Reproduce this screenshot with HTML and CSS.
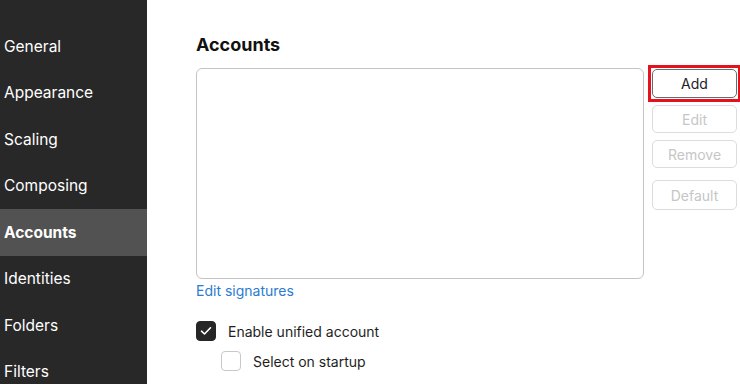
FILE: index.html
```html
<!DOCTYPE html>
<html lang="en">
<head>
    <meta charset="UTF-8">
    <meta name="viewport" content="width=device-width, initial-scale=1.0">
    <title>Preferences</title>
    <link rel="stylesheet" href="styles.css">
</head>
<body>
    <div class="sidebar">
        <a href="#">General</a>
        <a href="#">Appearance</a>
        <a href="#">Scaling</a>
        <a href="#">Composing</a>
        <a href="#" class="active">Accounts</a>
        <a href="#">Identities</a>
        <a href="#">Folders</a>
        <a href="#">Filters</a>
    </div>

    <div class="main">
        <h2>Accounts</h2>
        <div class="accounts">
            <div class="account-list"></div>
            <div class="buttons">
                <div class="highlight"><button class="primary">Add</button></div>
                <button disabled>Edit</button>
                <button disabled>Remove</button>
                <button disabled class="default">Default</button>
            </div>
        </div>
        <a href="#" class="link">Edit signatures</a>
        <label class="check">
            <span class="box checked">
                <svg width="12" height="10" viewBox="0 0 12 10"><path d="M1.5 5.2 L4.5 8 L10.5 1.8" fill="none" stroke="#fff" stroke-width="1.6" stroke-linecap="round" stroke-linejoin="round"/></svg>
            </span>
            Enable unified account
        </label>
        <label class="check sub">
            <span class="box"></span>
            Select on startup
        </label>
    </div>
</body>
</html>
```

FILE: styles.css
```css
body {
    margin: 0;
    padding: 0;
    display: flex;
    height: 100vh;
    overflow: hidden;
    background: #fff;
    font-family: Inter, "Noto Sans", sans-serif;
    color: #1e1e1e;
}
.sidebar {
    width: 147px;
    flex-shrink: 0;
    background: #282828;
    padding-top: 23px;
    display: flex;
    flex-direction: column;
}
.sidebar a {
    display: flex;
    align-items: center;
    flex-shrink: 0;
    height: 46.5px;
    padding-left: 4px;
    color: #fff;
    text-decoration: none;
    font-size: 15.5px;
}
.sidebar a.active {
    background: #525252;
    font-weight: bold;
}
.main {
    flex: 1;
    padding: 33px 0 0 49px;
    display: flex;
    flex-direction: column;
}
.main h2 {
    margin: 0 0 11px;
    font-size: 18px;
    line-height: 24px;
    font-weight: bold;
    color: #111;
}
.accounts {
    display: flex;
    gap: 8px;
}
.account-list {
    width: 446px;
    height: 209px;
    border: 1px solid #c4c4c4;
    border-radius: 6px;
}
.buttons {
    display: flex;
    flex-direction: column;
    gap: 7px;
    padding-top: 1px;
}
.buttons button {
    width: 85px;
    height: 28px;
    background: #fff;
    border: 1px solid #dcdcdc;
    border-radius: 5px;
    font-family: inherit;
    font-size: 14px;
    color: #c6c6c6;
}
.highlight {
    margin: -4px;
    padding: 1px;
    border: 3px solid #e3121c;
    display: flex;
}
.buttons button.primary {
    height: 29px;
    border-color: #6a6a6a;
    color: #222;
}
.buttons button.default {
    margin-top: 5px;
    height: 30px;
}
.link {
    margin-top: 3px;
    font-size: 14px;
    line-height: 18px;
    color: #2b7bd1;
    text-decoration: none;
    align-self: flex-start;
}
.check {
    display: flex;
    align-items: center;
    gap: 12px;
    font-size: 14px;
    color: #1e1e1e;
    margin-top: 21px;
}
.check.sub {
    margin-top: 10px;
    margin-left: 25px;
}
.box {
    width: 18px;
    height: 18px;
    border: 1px solid #c8c8c8;
    border-radius: 4px;
    display: flex;
    align-items: center;
    justify-content: center;
    background: #fff;
}
.box.checked {
    background: #262626;
    border-color: #262626;
}
```
